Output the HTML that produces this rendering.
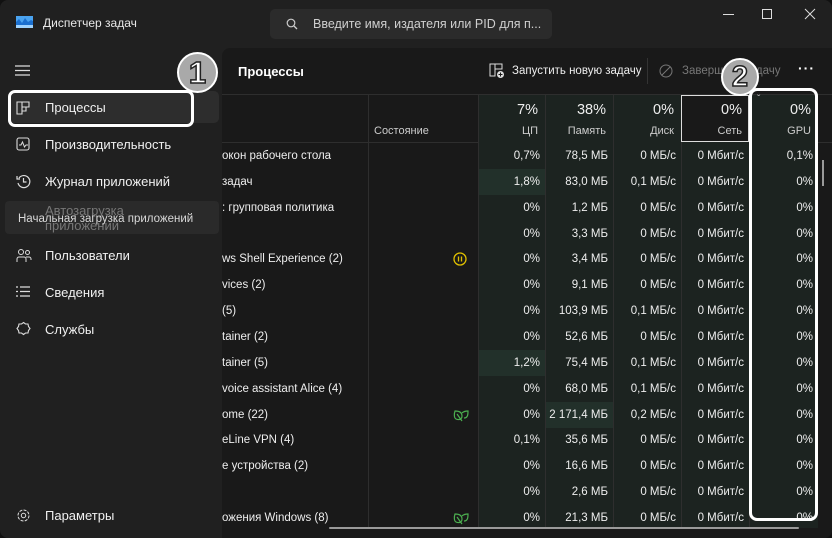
<!DOCTYPE html>
<html><head><meta charset="utf-8"><style>
*{margin:0;padding:0;box-sizing:border-box}
body{width:832px;height:538px;background:#111;font-family:"Segoe UI","Liberation Sans",sans-serif;color:#fff;overflow:hidden;position:relative;font-size:12px}
.win{position:absolute;left:0;top:0;width:832px;height:538px;background:#202020;border-radius:8px;overflow:hidden}
.abs{position:absolute}
.title{left:43px;top:16px;font-size:12px;color:#e8e8e8}
.search{left:270px;top:9px;width:282px;height:30px;background:#2b2b2b;border-radius:5px}
.search span{position:absolute;left:43px;top:8px;font-size:12.5px;color:#cfcfcf}
.side{font-size:13px;color:#f0f0f0}
.item{position:absolute;left:45px}
.ico{position:absolute;left:15px}
.panel{left:222px;top:48px;width:610px;height:490px;background:#191919;border-top-left-radius:8px;overflow:hidden}
.cell{position:absolute;text-align:right;font-size:11.5px;color:#eee;height:26px;line-height:26px}
.name{position:absolute;left:0;font-size:11.5px;color:#eee;height:26px;line-height:26px;white-space:nowrap}
.vl{position:absolute;width:1px;background:#2e2e2e}
</style></head><body>
<div class="win">
 <!-- logo -->
 <svg class="abs" style="left:16px;top:16px" width="17" height="12"><rect width="17" height="12" fill="#4aa3f0"/><path d="M0 6 L3 3 L6 7 L9 2 L12 6 L15 4 L17 5 V12 H0Z" fill="#1a6fd0"/><rect y="9" width="17" height="3" fill="#9fd3ff"/></svg>
 <div class="abs title">Диспетчер задач</div>
 <div class="abs search"><svg class="abs" style="left:16px;top:9px" width="12" height="12"><circle cx="5" cy="5" r="3.8" stroke="#ccc" stroke-width="1.2" fill="none"/><path d="M8 8 L11 11" stroke="#ccc" stroke-width="1.3"/></svg><span>Введите имя, издателя или PID для п...</span></div>
 <svg class="abs" style="left:720px;top:8px" width="100" height="14"><path d="M3 6.5 H14" stroke="#ddd"/><rect x="42.5" y="1.5" width="9" height="9" stroke="#ddd" fill="none"/><path d="M85 1 L95 11 M95 1 L85 11" stroke="#ddd"/></svg>

 <div class="side">
  <svg class="abs" style="left:15px;top:65px" width="16" height="12"><path d="M0 1h15M0 5.5h15M0 10h15" stroke="#ddd" stroke-width="1.2"/></svg>
  <div class="abs" style="left:8px;top:91px;width:211px;height:32px;background:#2d2d2d;border-radius:5px"></div>
  <svg class="abs" style="left:16px;top:101px" width="14" height="14"><path d="M1 1h5v12H1zM6 1h7v5H6zM6 6h4v4H6" stroke="#ddd" fill="none" stroke-width="1.1"/></svg>
  <div class="item" style="top:100px">Процессы</div>
  <svg class="abs" style="left:16px;top:137px" width="14" height="14"><rect x="1" y="1" width="12" height="12" rx="2" stroke="#ddd" fill="none" stroke-width="1.1"/><path d="M3 8h2l1.5-3 2 5 1.5-2h2" stroke="#ddd" fill="none"/></svg>
  <div class="item" style="top:137px">Производительность</div>
  <svg class="abs" style="left:16px;top:174px" width="15" height="15"><path d="M3 4A6 6 0 1 1 2 9" stroke="#ddd" fill="none" stroke-width="1.2"/><path d="M1 2v3h3M7.5 4v4h3" stroke="#ddd" fill="none" stroke-width="1.2"/></svg>
  <div class="item" style="top:174px">Журнал приложений</div>
  <div class="abs" style="left:5px;top:201px;width:214px;height:33px;background:#2a2a2a;border-radius:4px"></div>
  <div class="item" style="top:203px;color:#777;line-height:15px">Автозагрузка<br>приложений</div>
  <div class="abs" style="left:18px;top:213px;font-size:11.5px;color:#d8d8d8">Начальная загрузка приложений</div>
  <svg class="abs" style="left:16px;top:248px" width="16" height="15"><circle cx="5" cy="4" r="2.5" stroke="#ddd" fill="none"/><circle cx="11.5" cy="4.5" r="2" stroke="#ddd" fill="none"/><path d="M1 14v-3a2 2 0 0 1 2-2h5a2 2 0 0 1 2 2v3M10 9h3a2 2 0 0 1 2 2v1" stroke="#ddd" fill="none"/></svg>
  <div class="item" style="top:248px">Пользователи</div>
  <svg class="abs" style="left:16px;top:286px" width="15" height="12"><path d="M0 1h2M0 5.5h2M0 10h2M4 1h10M4 5.5h10M4 10h10" stroke="#ddd" stroke-width="1.2"/></svg>
  <div class="item" style="top:285px">Сведения</div>
  <svg class="abs" style="left:16px;top:321px" width="15" height="15"><path d="M7.5 1.5l2 1.5 2.5 0 .5 2.5 1.5 2-1.5 2-.5 2.5-2.5 0-2 1.5-2-1.5-2.5 0-.5-2.5L1 7.5l1.5-2 .5-2.5 2.5 0z" stroke="#ddd" fill="none" stroke-width="1.1"/></svg>
  <div class="item" style="top:322px">Службы</div>
  <svg class="abs" style="left:16px;top:508px" width="15" height="15"><circle cx="7.5" cy="7.5" r="2.2" stroke="#ddd" fill="none"/><circle cx="7.5" cy="7.5" r="5.5" stroke="#ddd" fill="none" stroke-dasharray="3 1.3"/></svg>
  <div class="item" style="top:508px">Параметры</div>
 </div>

 <div class="abs panel">
  <div class="abs" style="left:16px;top:16px;font-size:13px;font-weight:bold">Процессы</div>
  <svg class="abs" style="left:267px;top:15px" width="16" height="16"><path d="M1 1h5v12H1zM6 1h7v5H6z" stroke="#ddd" fill="none"/><circle cx="11.5" cy="11.5" r="3.5" fill="#ddd"/><path d="M11.5 9.5v4M9.5 11.5h4" stroke="#191919"/></svg>
  <div class="abs" style="left:290px;top:17px;font-size:11.5px;color:#eee">Запустить новую задачу</div>
  <div class="abs" style="left:425px;top:10px;width:1px;height:26px;background:#333"></div>
  <svg class="abs" style="left:437px;top:16px" width="14" height="14"><circle cx="7" cy="7" r="6" stroke="#777" fill="none"/><path d="M3 11L11 3" stroke="#777"/></svg>
  <div class="abs" style="left:460px;top:17px;font-size:11.5px;color:#777">Завершить задачу</div>
  <div class="abs" style="left:576px;top:12px;font-size:14px;font-weight:bold;letter-spacing:1px">···</div>
  <div class="abs" style="left:0;top:46px;width:610px;height:1px;background:#2e2e2e"></div>
  <div class="abs" style="left:0;top:94px;width:610px;height:1px;background:#2e2e2e"></div>
  <div class="abs" style="left:152px;top:77px;font-size:11px;color:#ccc">Состояние</div>
  <div id="hdr"></div>
  <div id="body"></div>
  <div class="abs" style="left:107px;top:479px;width:470px;height:2px;background:#9a9a9a;border-radius:1px"></div>
  <div class="abs" style="left:600px;top:112px;width:2px;height:26px;background:#9a9a9a"></div>
 </div>

 <!-- annotations -->
 <div class="abs" style="left:8px;top:90px;width:186px;height:37px;border:3px solid #fff;border-radius:7px"></div>
 <div class="abs" style="left:749px;top:88px;width:69px;height:433px;border:3px solid #fff;border-radius:8px"></div>
 <div class="abs" style="left:177px;top:52px;width:41px;height:41px;border-radius:50%;background:#a9a9a9;border:2px solid #fff;text-align:center;line-height:37px;font-size:31px;font-weight:bold;color:#fff;-webkit-text-stroke:1.5px #222;font-family:'Liberation Sans',sans-serif">1</div>
 <div class="abs" style="left:721px;top:58px;width:38px;height:38px;border-radius:50%;background:#a9a9a9;border:2px solid #fff;text-align:center;line-height:34px;font-size:29px;font-weight:bold;color:#fff;-webkit-text-stroke:1.5px #222;font-family:'Liberation Sans',sans-serif">2</div>
</div>
<script>
const cols=[[256,323,'7%','ЦП'],[323,391,'38%','Память'],[391,459,'0%','Диск'],[459,527,'0%','Сеть'],[527,596,'0%','GPU']];
let h='';
h+='<div class="vl" style="left:146px;top:46px;height:434px"></div>';
cols.forEach((c,i)=>{
 h+=`<div class="abs" style="left:${c[0]}px;top:47px;width:${c[1]-c[0]}px;height:433px;background:#1c2320"></div>`;
 h+=`<div class="vl" style="left:${c[0]}px;top:46px;height:434px"></div>`;
 h+=`<div class="abs" style="left:${c[0]}px;top:54px;width:${c[1]-c[0]-7}px;text-align:right;font-size:14.5px;color:#eee">${c[2]}</div>`;
 h+=`<div class="abs" style="left:${c[0]}px;top:77px;width:${c[1]-c[0]-7}px;text-align:right;font-size:11px;color:#ccc">${c[3]}</div>`;
});
h+='<div class="abs" style="left:459px;top:47px;width:68px;height:47px;border:1px solid #ddd;background:#191919"></div>';
h+='<div class="abs" style="left:459px;top:54px;width:61px;text-align:right;font-size:14.5px;color:#eee">0%</div><div class="abs" style="left:459px;top:77px;width:61px;text-align:right;font-size:11px;color:#ccc">Сеть</div>';
h+='<div class="abs" style="left:535px;top:46px;font-size:10px;color:#bbb">ˇ</div>';
document.getElementById('hdr').innerHTML=h;
const rows=[
['окон рабочего стола','',"0,7%","78,5 МБ","0 МБ/с","0,1%"],
['задач','',"1,8%","83,0 МБ","0,1 МБ/с","0%"],
[': групповая политика','',"0%","1,2 МБ","0 МБ/с","0%"],
['','',"0%","3,3 МБ","0 МБ/с","0%"],
['ws Shell Experience (2)','p',"0%","3,4 МБ","0 МБ/с","0%"],
['vices (2)','',"0%","9,1 МБ","0 МБ/с","0%"],
[' (5)','',"0%","103,9 МБ","0,1 МБ/с","0%"],
['tainer (2)','',"0%","52,6 МБ","0 МБ/с","0%"],
['tainer (5)','',"1,2%","75,4 МБ","0,1 МБ/с","0%"],
[' voice assistant Alice (4)','',"0%","68,0 МБ","0,1 МБ/с","0%"],
['ome (22)','l',"0%","2 171,4 МБ","0,2 МБ/с","0%"],
['eLine VPN (4)','',"0,1%","35,6 МБ","0 МБ/с","0%"],
['e устройства (2)','',"0%","16,6 МБ","0 МБ/с","0%"],
['','',"0%","2,6 МБ","0 МБ/с","0%"],
['ожения Windows (8)','l',"0%","21,3 МБ","0 МБ/с","0%"]];
let b='';
rows.forEach((r,i)=>{
 const y=95+i*25.85;
 if(r[2]=='1,8%'||r[2]=='1,2%') b+=`<div class="abs" style="left:257px;top:${y}px;width:66px;height:26px;background:#22302a"></div>`;
 if(r[3]=='2 171,4 МБ') b+=`<div class="abs" style="left:324px;top:${y}px;width:67px;height:26px;background:#22302a"></div>`;
 b+=`<div class="name" style="top:${y}px">${r[0]}</div>`;
 if(r[1]=='p') b+=`<svg class="abs" style="left:231px;top:${y+6}px" width="14" height="14"><circle cx="7" cy="7" r="6" stroke="#e0c000" fill="none" stroke-width="1.3"/><path d="M5.5 4.5v5M8.5 4.5v5" stroke="#e0c000" stroke-width="1.3"/></svg>`;
 if(r[1]=='l') b+=`<svg class="abs" style="left:231px;top:${y+6}px" width="16" height="14"><path d="M2 3c4 0 7 1 7 5s-4 4-6 3C1 10 1 6 2 3zM9 5c2-2 5-2 6-2 0 3 0 7-4 7M4 6l5 7" stroke="#4caf50" fill="none" stroke-width="1.2"/></svg>`;
 const vals=[r[2],r[3],r[4],'0 Мбит/с',r[5]];
 vals.forEach((v,j)=>{const c=cols[j];b+=`<div class="cell" style="left:${c[0]}px;top:${y}px;width:${c[1]-c[0]-5}px">${v}</div>`;});
});
document.getElementById('body').innerHTML=b;
</script>
</body></html>
